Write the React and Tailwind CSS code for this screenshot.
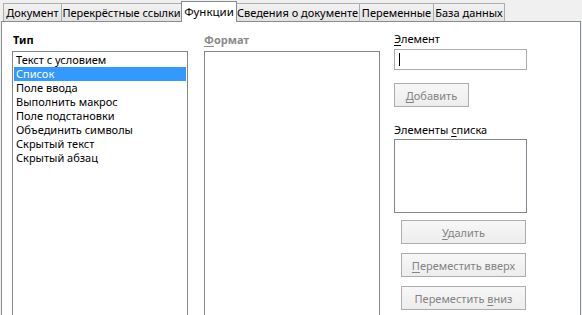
import { useState } from 'react';

const tabs = [
  { label: 'Документ', w: 'w-[59px]' },
  { label: 'Перекрёстные ссылки', w: 'w-[121px]' },
  { label: 'Функции', w: 'w-[56px]', active: true },
  { label: 'Сведения о документе', w: 'w-[125px]' },
  { label: 'Переменные', w: 'w-[75px]' },
  { label: 'База данных', w: 'w-[72px]' },
];

const types = [
  'Текст с условием',
  'Список',
  'Поле ввода',
  'Выполнить макрос',
  'Поле подстановки',
  'Объединить символы',
  'Скрытый текст',
  'Скрытый абзац',
];

function Btn({ children, className = '', disabled }) {
  return (
    <button
      className={`h-[24px] border border-[#adadad] bg-gradient-to-b from-[#f7f7f7] to-[#ededed] text-[11px] leading-none ${
        disabled ? 'text-[#838383]' : 'text-[#555]'
      } ${className}`}
    >
      {children}
    </button>
  );
}

export default function App() {
  const [selected, setSelected] = useState(1);

  return (
    <div
      className="w-[582px] h-[315px] overflow-hidden bg-[#f0f0f0] text-[11px] text-black"
      style={{ fontFamily: '"Noto Sans", "Open Sans", sans-serif' }}
    >
      {/* Tabs */}
      <div className="flex items-end h-[21px] pl-[3px]">
        {tabs.map((t) =>
          t.active ? (
            <div
              key={t.label}
              className={`${t.w} relative z-10 -mb-px h-[21px] -mx-px bg-white border border-b-0 border-[#898c95] flex items-center justify-center whitespace-nowrap text-[11.5px]`}
            >
              {t.label}
            </div>
          ) : (
            <div
              key={t.label}
              className={`${t.w} h-[18px] pt-px bg-gradient-to-b from-[#f2f2f2] to-[#e3e3e3] border border-b-0 border-[#acacac] -ml-px first:ml-0 flex items-center justify-center whitespace-nowrap`}
            >
              {t.label}
            </div>
          )
        )}
      </div>

      {/* Panel */}
      <div className="ml-px w-[580px] h-[300px] bg-white border border-[#898c95] flex pl-[10px]">
        {/* Type column */}
        <div className="w-[176px] flex flex-col">
          <div className="h-[29px] pt-[10px] pl-[1px] font-bold leading-[16px]">Тип</div>
          <div className="flex-1 border border-[#828790] pt-px px-px">
            {types.map((t, i) => (
              <div
                key={t}
                onClick={() => setSelected(i)}
                className={`h-[14px] leading-[14px] pl-[2px] whitespace-nowrap ${
                  i === selected ? 'bg-[#3399ff] text-white' : ''
                }`}
              >
                {t}
              </div>
            ))}
          </div>
        </div>

        {/* Format column */}
        <div className="w-[176px] ml-[16px] flex flex-col">
          <div className="h-[29px] pt-[10px] font-bold leading-[16px] text-[#8a8a8a]">
            <span className="underline underline-offset-2">Ф</span>ормат
          </div>
          <div className="flex-1 border border-[#828790]" />
        </div>

        {/* Right column */}
        <div className="w-[133px] ml-[14px] flex flex-col">
          <div className="h-[27px] pt-[9px] leading-[16px]">
            <span className="underline underline-offset-2">Э</span>лемент
          </div>
          <div className="h-[21px] border border-[#abadb3] flex items-center pl-[4px]">
            <div className="w-px h-[13px] bg-black" />
          </div>
          <Btn disabled className="mt-[13px] w-[75px]">
            <span className="underline underline-offset-2">Д</span>обавить
          </Btn>
          <div className="h-[32px] pt-[15px] leading-[16px] whitespace-nowrap">
            Элементы <span className="underline underline-offset-2">с</span>писка
          </div>
          <div className="h-[74px] border border-[#828790]" />
          <div className="flex flex-col gap-[9px] mt-[7px] pl-[7px]">
            <Btn disabled className="w-[125px]">
              <span className="underline underline-offset-2">У</span>далить
            </Btn>
            <Btn disabled className="w-[125px]">
              <span className="underline underline-offset-2">П</span>ереместить вверх
            </Btn>
            <Btn disabled className="w-[125px]">
              Переместить <span className="underline underline-offset-2">в</span>низ
            </Btn>
          </div>
        </div>
      </div>
    </div>
  );
}
